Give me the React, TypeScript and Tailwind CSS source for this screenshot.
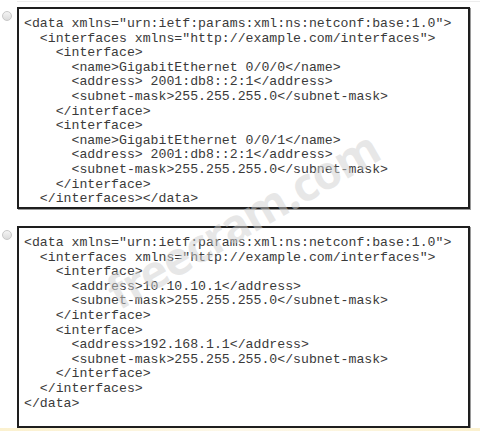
const optionA = `<data xmlns="urn:ietf:params:xml:ns:netconf:base:1.0">
  <interfaces xmlns="http://example.com/interfaces">
    <interface>
      <name>GigabitEthernet 0/0/0</name>
      <address> 2001:db8::2:1</address>
      <subnet-mask>255.255.255.0</subnet-mask>
    </interface>
    <interface>
      <name>GigabitEthernet 0/0/1</name>
      <address> 2001:db8::2:1</address>
      <subnet-mask>255.255.255.0</subnet-mask>
    </interface>
  </interfaces></data>`;

const optionB = `<data xmlns="urn:ietf:params:xml:ns:netconf:base:1.0">
  <interfaces xmlns="http://example.com/interfaces">
    <interface>
      <address>10.10.10.1</address>
      <subnet-mask>255.255.255.0</subnet-mask>
    </interface>
    <interface>
      <address>192.168.1.1</address>
      <subnet-mask>255.255.255.0</subnet-mask>
    </interface>
  </interfaces>
</data>`;

function Option({ code }: { code: string }) {
  return (
    <div className="flex items-start">
      {/* radio */}
      <div className="w-[17px] shrink-0 pt-[4px] pl-[2px]">
        <div className="w-[10px] h-[10px] rounded-full border border-[#c8c8c8] bg-gradient-to-b from-[#f4f4f4] to-[#dcdcdc]" />
      </div>

      {/* code box */}
      <div className="w-[453px] h-[202px] border-2 border-[#1e1e1e] bg-white pl-[5px] pt-[8px] shadow-[1px_1px_0_#9a9a9a]">
        <pre className="font-mono text-[13.2px] leading-[14.6px] text-[#3a3a3a] m-0">
          {code}
        </pre>
      </div>
    </div>
  );
}

export default function App() {
  return (
    <div className="relative w-[480px] h-[431px] overflow-hidden bg-white">
      <div className="h-px bg-[#ededed] ml-[17px] mt-[1px]" />

      <div className="flex flex-col gap-[17px] pt-[5px]">
        <Option code={optionA} />
        <Option code={optionB} />
      </div>

      {/* watermark */}
      <div className="absolute left-[90px] top-[185px] -rotate-[30deg] pointer-events-none font-sans font-bold text-[46px] text-[#cfcfcf]/50 tracking-tight">
        freecram.com
      </div>

      <div className="absolute left-0 bottom-0 w-[480px] h-[3px] bg-gradient-to-r from-[#fbf1cf] via-[#fdf8ea] to-[#fbf1cf]" />
    </div>
  );
}
